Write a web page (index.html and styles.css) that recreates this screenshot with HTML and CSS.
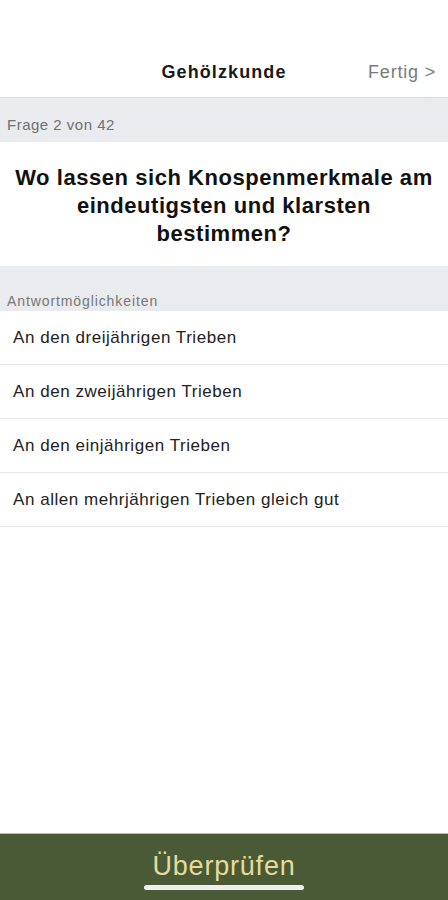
FILE: index.html
```html
<!DOCTYPE html>
<html lang="de">
<head>
<meta charset="utf-8">
<title>Gehölzkunde</title>
<link rel="stylesheet" href="styles.css">
</head>
<body>
<div class="screen">
  <header class="nav">
    <div class="nav-side"></div>
    <h1 class="nav-title">Gehölzkunde</h1>
    <div class="nav-side nav-action">Fertig &gt;</div>
  </header>
  <div class="band band-progress">Frage 2 von 42</div>
  <div class="question">Wo lassen sich Knospenmerkmale am eindeutigsten und klarsten bestimmen?</div>
  <div class="band band-answers">Antwortmöglichkeiten</div>
  <ul class="options">
    <li class="option">An den dreijährigen Trieben</li>
    <li class="option">An den zweijährigen Trieben</li>
    <li class="option">An den einjährigen Trieben</li>
    <li class="option">An allen mehrjährigen Trieben gleich gut</li>
  </ul>
  <div class="spacer"></div>
  <footer class="check-bar">
    <span class="check-label">Überprüfen</span>
    <span class="home-indicator"></span>
  </footer>
</div>
</body>
</html>
```

FILE: styles.css
```css
* { box-sizing: border-box; }
html, body { margin: 0; padding: 0; background: #ffffff; }
body { font-family: "Liberation Sans", Arial, sans-serif; color: #111; }

.screen {
  width: 448px;
  height: 900px;
  display: flex;
  flex-direction: column;
  overflow: hidden;
}

.nav {
  height: 98px;
  padding-top: 48px;
  display: grid;
  grid-template-columns: 1fr auto 1fr;
  align-items: center;
  border-bottom: 1px solid #dcdcdc;
}
.nav-title {
  margin: 0;
  font-size: 18px;
  font-weight: bold;
  letter-spacing: 1.1px;
  color: #1a1a1a;
}
.nav-action {
  justify-self: end;
  padding-right: 12px;
  font-size: 18px;
  letter-spacing: 0.8px;
  color: #7b7b7b;
}

.band {
  background: #e9ebee;
  color: #707070;
}
.band-progress {
  height: 44px;
  padding: 18px 0 0 7px;
  font-size: 15px;
  letter-spacing: 0.5px;
}
.question {
  height: 124px;
  padding: 22px 10px 0;
  text-align: center;
  font-size: 22px;
  line-height: 28px;
  font-weight: bold;
  letter-spacing: 0.55px;
  color: #111;
}
.band-answers {
  height: 45px;
  padding: 27px 0 0 7px;
  font-size: 14px;
  letter-spacing: 0.9px;
  color: #777;
}

.options {
  list-style: none;
  margin: 0;
  padding: 0;
}
.option {
  height: 54px;
  display: flex;
  align-items: center;
  padding: 0 13px;
  font-size: 17px;
  letter-spacing: 0.55px;
  color: #222;
  border-bottom: 1px solid #e6e6e6;
}

.spacer { flex: 1; }

.check-bar {
  height: 67px;
  background: #4a5936;
  border-top: 1px solid #b9bcb2;
  display: flex;
  flex-direction: column;
  align-items: center;
  padding-top: 17px;
}
.check-label {
  font-size: 27px;
  line-height: 30px;
  letter-spacing: 0.8px;
  color: #e4dc9c;
}
.home-indicator {
  margin-top: 4px;
  width: 160px;
  height: 5px;
  border-radius: 3px;
  background: #eeeeee;
}
```
